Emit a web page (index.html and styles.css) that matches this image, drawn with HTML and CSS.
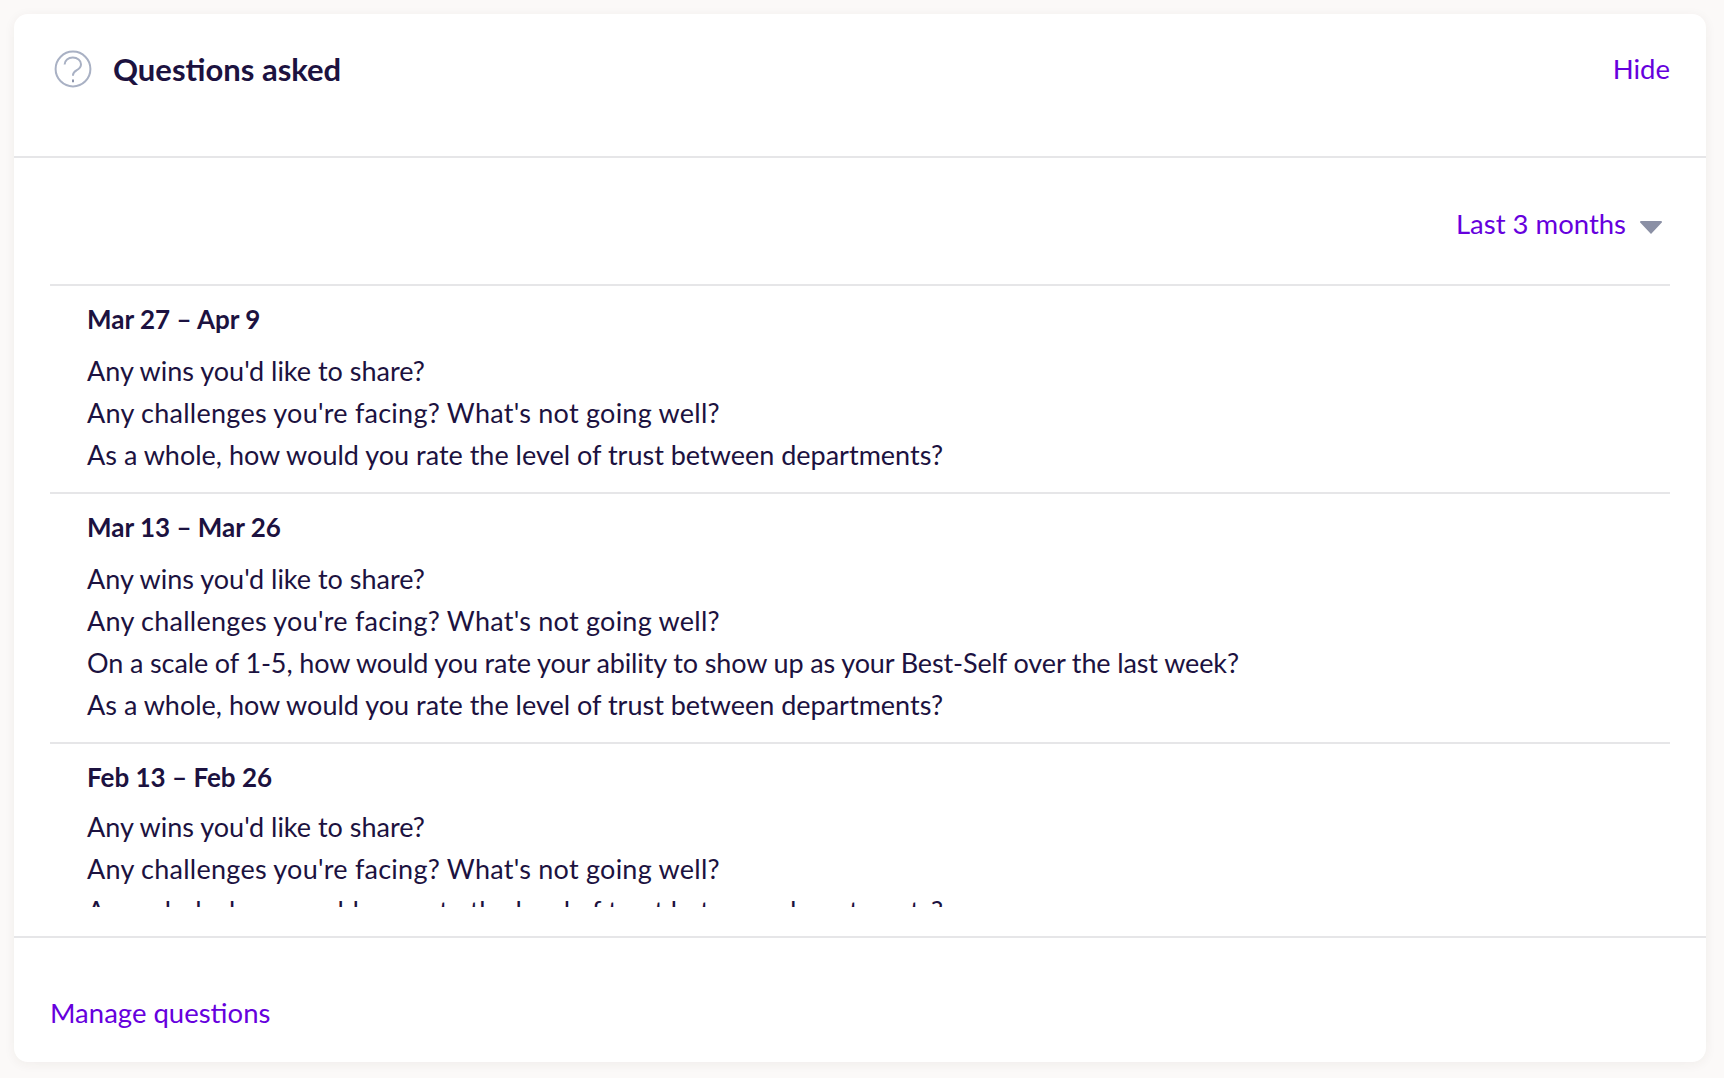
FILE: index.html
```html
<!DOCTYPE html>
<html lang="en">
<head>
<meta charset="utf-8">
<title>Questions asked</title>
<link rel="stylesheet" href="styles.css">
</head>
<body>
<main class="card">
  <header class="card-header">
    <div class="title-wrap">
      <svg class="help-icon" width="38" height="38" viewBox="0 0 38 38" fill="none" stroke="#a9b1c4" stroke-width="2">
        <circle cx="19" cy="19" r="17.4"/>
        <path d="M10.6 14.6c0-4.4 3.7-7 8.2-7 4.6 0 8.2 2.7 8.2 6.6 0 3-2 4.6-4.2 5.9-2.2 1.3-3.8 2.4-3.8 5v.6"/>
        <path d="M19 29.6v2.6" stroke="#8b93aa"/>
      </svg>
      <h1 class="title">Questions asked</h1>
    </div>
    <a class="link" href="#">Hide</a>
  </header>
  <section class="card-body">
    <div class="filter">
      <a class="link" href="#">Last 3 months</a>
      <svg class="caret" width="22" height="13" viewBox="0 0 22 13"><path d="M1 0h20a1 1 0 0 1 .8 1.6L11 13 .2 1.6A1 1 0 0 1 1 0z" fill="#8b90a5"/></svg>
    </div>
    <div class="groups">
      <article class="group">
        <h2 class="date">Mar 27 – Apr 9</h2>
        <p class="question">Any wins you'd like to share?</p>
        <p class="question question-wide">Any challenges you're facing? What's not going well?</p>
        <p class="question">As a whole, how would you rate the level of trust between departments?</p>
      </article>
      <article class="group">
        <h2 class="date">Mar 13 – Mar 26</h2>
        <p class="question">Any wins you'd like to share?</p>
        <p class="question question-wide">Any challenges you're facing? What's not going well?</p>
        <p class="question question-narrow">On a scale of 1-5, how would you rate your ability to show up as your Best-Self over the last week?</p>
        <p class="question">As a whole, how would you rate the level of trust between departments?</p>
      </article>
      <article class="group group-tight">
        <h2 class="date">Feb 13 – Feb 26</h2>
        <p class="question">Any wins you'd like to share?</p>
        <p class="question question-wide">Any challenges you're facing? What's not going well?</p>
        <p class="question">As a whole, how would you rate the level of trust between departments?</p>
      </article>
    </div>
  </section>
  <footer class="card-footer">
    <a class="link" href="#">Manage questions</a>
  </footer>
</main>
</body>
</html>
```
FILE: styles.css
```css
* { box-sizing: border-box; }
html, body { height: 100%; }
body {
  margin: 0;
  padding: 14px 18px 16px 14px;
  background: #fbf9f8;
  font-family: "Lato", "Open Sans", sans-serif;
  color: #1c1240;
}
.card {
  height: 1048px;
  background: #fff;
  border-radius: 14px;
  box-shadow: 0 2px 12px rgba(60, 50, 40, 0.06);
  display: flex;
  flex-direction: column;
  overflow: hidden;
}
.card-header {
  height: 144px;
  flex: none;
  border-bottom: 2px solid #e6e6e8;
  padding: 36px 36px 0 40px;
  display: flex;
  justify-content: space-between;
  align-items: flex-start;
}
.title-wrap { display: flex; align-items: center; gap: 21px; }
.help-icon { flex: none; display: block; }
.title { margin: 0; font-size: 31px; line-height: 38px; font-weight: 700; }
.link {
  color: #6600dd;
  text-decoration: none;
  font-size: 27.5px;
  line-height: 38px;
}
.card-body { flex: 1; min-height: 0; padding: 0 36px; display: flex; flex-direction: column; }
.filter {
  height: 126px;
  flex: none;
  padding: 6px 8px 0 0;
  display: flex;
  justify-content: flex-end;
  align-items: center;
  gap: 14px;
}
.caret { flex: none; margin-top: 7px; }
.groups { height: 623px; flex: none; overflow: hidden; }
.group {
  border-top: 2px solid #e6e6e8;
  padding: 14px 0 16px 37px;
}
.date { margin: 0 0 12px; font-size: 26px; line-height: 38px; font-weight: 700; }
.group-tight { padding-top: 14px; }
.group-tight .date { margin-bottom: 10px; }
.question { margin: 0; font-size: 27px; line-height: 42px; }
.question-wide { letter-spacing: 0.25px; }
.question-narrow { letter-spacing: -0.12px; }
.card-footer {
  height: 126px;
  flex: none;
  border-top: 2px solid #e6e6e8;
  padding: 56px 36px 0 36px;
}
```
